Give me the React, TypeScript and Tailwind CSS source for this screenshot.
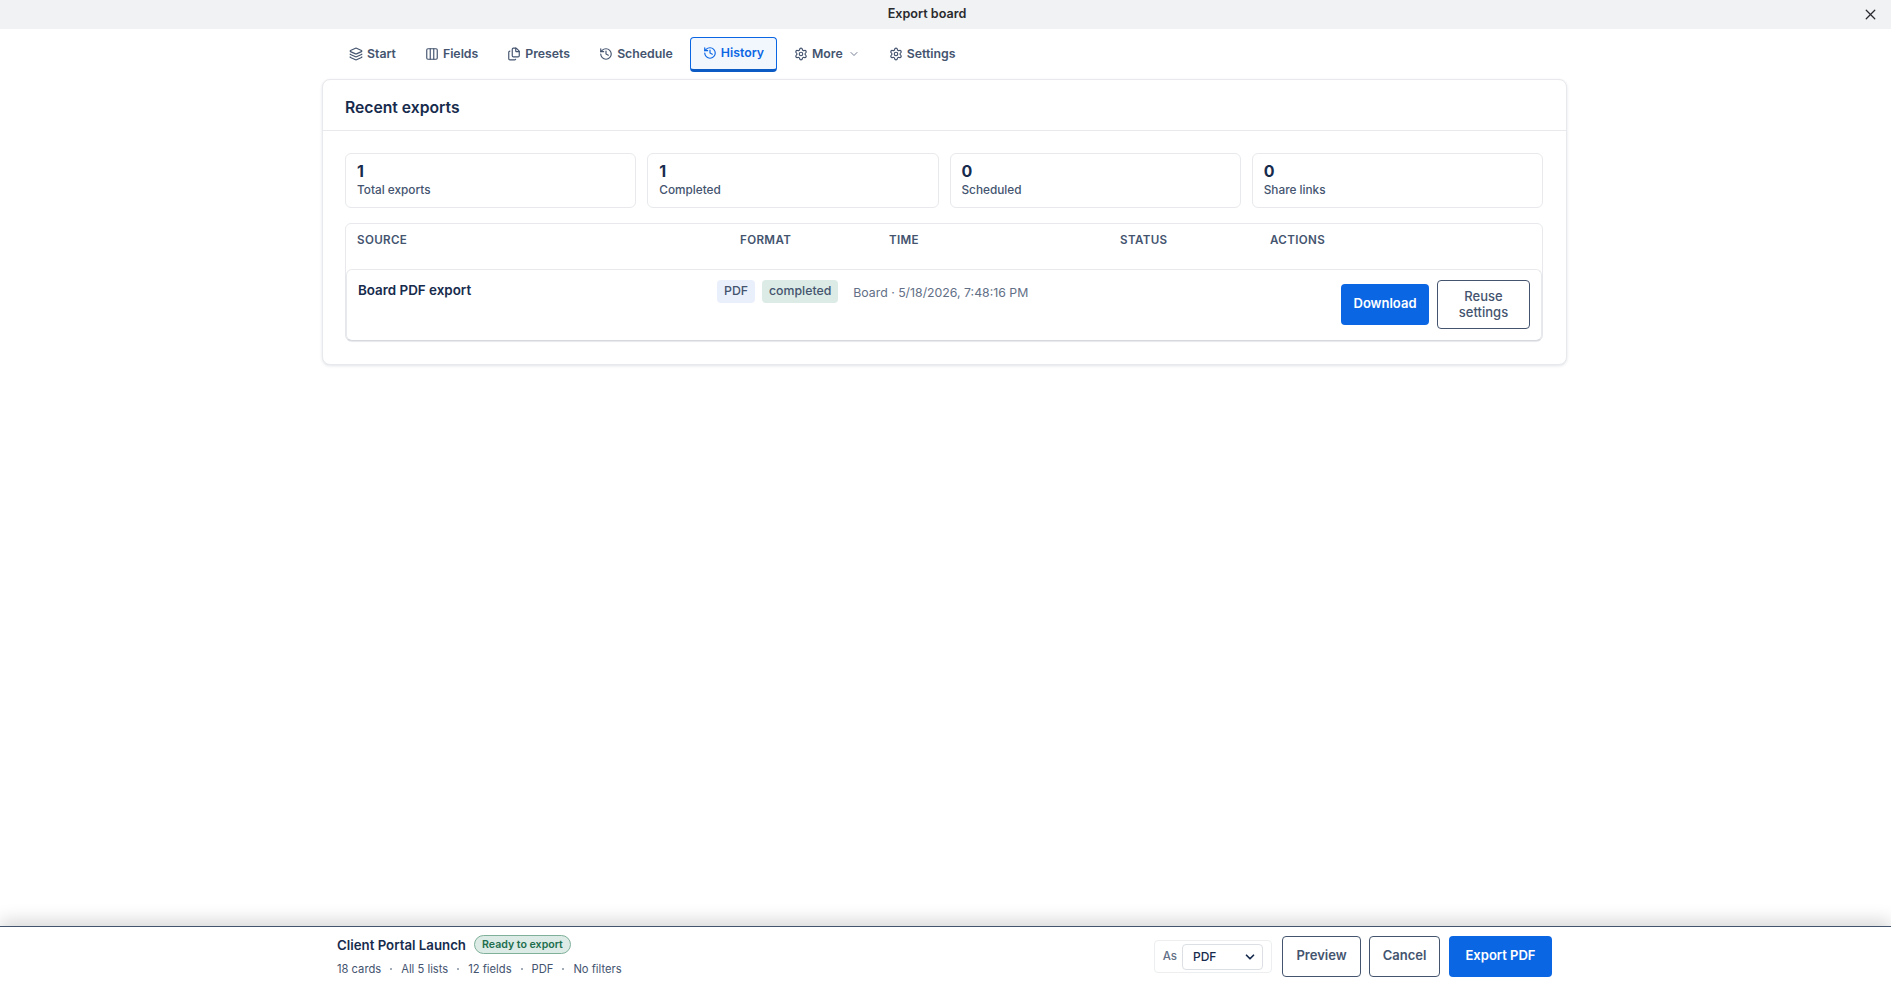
import { ChevronDown, Columns3, Files, History, Layers, Settings, X } from "lucide-react";

const tabs = [
  { label: "Start", icon: Layers },
  { label: "Fields", icon: Columns3 },
  { label: "Presets", icon: Files },
  { label: "Schedule", icon: History },
  { label: "History", icon: History, active: true },
  { label: "More", icon: Settings, caret: true },
  { label: "Settings", icon: Settings },
];

const stats = [
  { value: "1", label: "Total exports" },
  { value: "1", label: "Completed" },
  { value: "0", label: "Scheduled" },
  { value: "0", label: "Share links" },
];

const meta = ["18 cards", "All 5 lists", "12 fields", "PDF", "No filters"];

export default function App() {
  return (
    <div className="flex h-[982px] flex-col overflow-hidden bg-white font-['Inter',sans-serif] text-[#172b4d]">
      {/* Title bar */}
      <header className="relative flex h-[29px] shrink-0 items-center justify-center bg-[#f1f2f4] pb-[1px] pr-[37px]">
        <h1 className="text-[12.6px] font-semibold text-[#292a2e]">Export board</h1>
        <button type="button" className="absolute right-[12px] top-[6px] text-[#292a2e]">
          <X size={17} strokeWidth={1.75} />
        </button>
      </header>

      {/* Main Content */}
      <main className="ml-[322px] w-[1245px] flex-1">
        <nav className="flex h-[50px] items-center gap-[5px] pl-[15px]">
          {tabs.map((tab) => (
            <button
              key={tab.label}
              type="button"
              className={`flex h-[35px] items-center gap-[4px] rounded-[4px] px-[12px] text-[12.3px] font-semibold ${
                tab.active
                  ? "border border-[#0b66e4] border-b-[3px] border-b-[#0c5ac4] bg-[#f2f7fe] text-[#0b66e4]"
                  : "text-[#44546f]"
              }`}
            >
              <tab.icon size={14} strokeWidth={2} />
              {tab.label}
              {tab.caret && <ChevronDown size={12} strokeWidth={1.5} className="ml-[1px]" />}
            </button>
          ))}
        </nav>

        <section className="rounded-[8px] border border-[#e7e9ec] bg-white shadow-[0_1px_3px_rgba(9,30,66,0.12)]">
          <div className="flex h-[51px] items-center border-b border-[#e7e9ec] pl-[22px] pt-[6px]">
            <h2 className="text-[15.7px] font-semibold">Recent exports</h2>
          </div>
          <div className="pb-[23px] pl-[22px] pr-[23px] pt-[22px]">
            <div className="grid grid-cols-4 gap-[11px]">
              {stats.map((stat) => (
                <div key={stat.label} className="h-[55px] rounded-[6px] border border-[#e7e9ec] px-[11px] pt-[7px]">
                  <div className="text-[16px] font-bold leading-[21px]">{stat.value}</div>
                  <div className="text-[11.8px] font-medium leading-[17px] text-[#44546f]">{stat.label}</div>
                </div>
              ))}
            </div>

            <div className="mt-[15px] h-[118px] rounded-[6px] border border-[#e7e9ec]">
              <div className="grid h-[45px] grid-cols-[383px_149px_231px_150px_1fr] pl-[11px] pt-[9px] text-[11.6px] font-semibold uppercase leading-[15px] tracking-[0.03em] text-[#44546f]">
                <div>Source</div>
                <div>Format</div>
                <div>Time</div>
                <div>Status</div>
                <div>Actions</div>
              </div>
              <div className="flex h-[72px] items-start rounded-[6px] border border-[#e7e9ec] border-b-[#d5d8dd] pl-[11px] pr-[11px] shadow-[0_1px_1px_rgba(9,30,66,0.1)]">
                <div className="mt-[10px] w-[359px] text-[13.4px] font-semibold leading-[20px]">Board PDF export</div>
                <div className="mt-[10px] flex gap-[7px] text-[12.3px] font-medium text-[#44546f]">
                  <span className="flex h-[23px] items-center rounded-[4px] bg-[#e9f0fb] px-[7px]">PDF</span>
                  <span className="flex h-[23px] items-center rounded-[4px] bg-[#dcebe5] px-[7px]">completed</span>
                </div>
                <div className="ml-[15px] mt-[14px] text-[12.3px] leading-[18px] text-[#626f86]">
                  Board · 5/18/2026, 7:48:16 PM
                </div>
                <div className="ml-auto flex items-center gap-[8px] self-center pb-[1px]">
                  <button type="button" className="h-[41px] w-[88px] rounded-[4px] bg-[#0b66e4] pb-[1px] text-[13px] font-semibold text-white">
                    Download
                  </button>
                  <button type="button" className="h-[49px] w-[93px] rounded-[4px] border border-[#44546f] pb-[2px] text-[13px] font-medium leading-[16px] text-[#44546f]">
                    Reuse settings
                  </button>
                </div>
              </div>
            </div>
          </div>
        </section>
      </main>

      {/* Footer */}
      <footer className="h-[56px] shrink-0 border-t border-[#44546f] bg-white shadow-[0_-6px_16px_rgba(0,0,0,0.15)]">
        <div className="ml-[322px] flex h-full w-[1244px] items-start justify-between pl-[15px] pr-[14px]">
          <div className="pt-[8px]">
            <div className="flex items-center gap-[8px]">
              <span className="text-[13.25px] font-semibold leading-[18px]">Client Portal Launch</span>
              <span className="flex h-[19px] items-center rounded-full border border-[#7fb09a] bg-[#dcebe5] px-[7px] text-[10.6px] font-semibold text-[#216e4e]">
                Ready to export
              </span>
            </div>
            <div className="mt-[7px] flex items-center gap-[9px] text-[11.2px] leading-[16px] text-[#44546f]">
              {meta.map((item, i) => (
                <span key={item} className="flex items-center gap-[9px]">
                  {i > 0 && <span className="h-[2px] w-[2px] rounded-full bg-[#8590a2]" />}
                  {item}
                </span>
              ))}
            </div>
          </div>
          <div className="flex items-start gap-[8px] pt-[9px]">
            <div className="mr-[2px] mt-[4px] flex h-[33px] items-center gap-[5px] rounded-[4px] border border-[#eceef0] pl-[8px] pr-[8px]">
              <span className="text-[11.5px] font-medium text-[#626f86]">As</span>
              <div className="flex h-[26px] w-[81px] items-center justify-between rounded-[4px] border border-[#dcdfe4] pl-[10px] pr-[5px] text-[12px] font-medium">
                PDF
                <ChevronDown size={14} strokeWidth={3} />
              </div>
            </div>
            <button type="button" className="h-[41px] w-[79px] rounded-[4px] border border-[#44546f] pb-[2px] text-[13px] font-semibold text-[#44546f]">
              Preview
            </button>
            <button type="button" className="h-[41px] w-[71px] rounded-[4px] border border-[#44546f] pb-[2px] text-[13px] font-semibold text-[#44546f]">
              Cancel
            </button>
            <button type="button" className="ml-[1px] h-[41px] w-[103px] rounded-[4px] bg-[#0b66e4] pb-[2px] text-[13px] font-semibold text-white">
              Export PDF
            </button>
          </div>
        </div>
      </footer>
    </div>
  );
}
